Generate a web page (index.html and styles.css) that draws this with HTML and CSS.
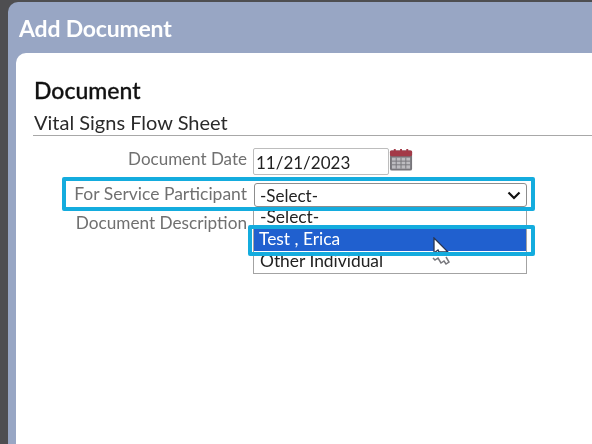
FILE: index.html
```html
<!DOCTYPE html>
<html lang="en">
<head>
<meta charset="utf-8">
<title>Add Document</title>
<link rel="stylesheet" href="styles.css">
</head>
<body>
<div class="dialog">
  <header class="titlebar">Add Document</header>
  <main class="panel">
    <h1 class="heading">Document</h1>
    <h2 class="subheading">Vital Signs Flow Sheet</h2>
    <form class="form">
      <div class="row row-date">
        <label class="label label-date">Document Date</label>
        <div class="date-input">11/21/2023</div>
        <svg class="calendar" width="25" height="24" viewBox="0 0 26 24" aria-hidden="true">
          <rect x="1" y="2" width="23" height="21" rx="2" fill="#77757a"/>
          <rect x="1" y="2" width="23" height="6" rx="1.500" fill="#a33a48"/>
          <rect x="3" y="9.500" width="19" height="11.500" fill="#bdbcc0"/>
          <path d="M3 13.200h19M3 17h19M7.500 9.500V21M12.500 9.500V21M17.500 9.500V21" stroke="#78777c" stroke-width="1"/>
          <path d="M6 0.500v3M12.500 0.500v3M19 0.500v3" stroke="#a33a48" stroke-width="2"/>
        </svg>
      </div>
      <div class="row row-select">
        <label class="label">For Service Participant</label>
        <div class="select">
          <span>-Select-</span>
          <svg class="chevron" width="14" height="9" viewBox="0 0 14 9" aria-hidden="true"><path d="M1.500 1.500L7 7l5.500-5.500" fill="none" stroke="#111" stroke-width="2.200"/></svg>
        </div>
      </div>
      <div class="row row-desc">
        <label class="label label-desc">Document Description</label>
      </div>
      <ul class="dropdown">
        <li class="option option-first">-Select-</li>
        <li class="option option-active">Test , Erica</li>
        <li class="option option-last">Other Individual</li>
      </ul>
      <svg class="cursor" width="20" height="32" viewBox="0 0 20 32" aria-hidden="true">
        <path d="M1 21l2 2 3-2 3 5 3-2 2 3 3-2-3-5" fill="#fff" stroke="#77777c" stroke-width="1.500"/>
        <path d="M2 1v15l4-3 1 2h9z" fill="#fff" stroke="#2a3550" stroke-width="1.300"/>
      </svg>
      <div class="frame frame-select"></div>
      <div class="frame frame-option"></div>
    </form>
  </main>
</div>
</body>
</html>
```
FILE: styles.css
```css
html, body {
  margin: 0;
  height: 444px;
  overflow: hidden;
}
body {
  background: #4e4e51;
  padding: 2px 0 0 8px;
  box-sizing: border-box;
  font-family: Lato, "Liberation Sans", sans-serif;
}
.dialog {
  height: 460px;
  background: #98a6c4;
  border-radius: 10px 0 0 0;
  display: flex;
  flex-direction: column;
  filter: blur(0.4px);
}
.titlebar {
  height: 51px;
  box-sizing: border-box;
  padding: 11px 0 0 11px;
  color: #fff;
  font-size: 23px;
  line-height: 30px;
  font-weight: 700;
  letter-spacing: -0.2px;
}
.panel {
  flex: 1;
  margin-left: 8px;
  background: #fff;
  border-radius: 10px 0 0 0;
  padding: 23px 0 0 17px;
}
.heading {
  margin: 0;
  padding-left: 1px;
  font-size: 23px;
  line-height: 28px;
  font-weight: 500;
  color: #111;
  -webkit-text-stroke: 0.3px #111;
}
.subheading {
  margin: 6px 0 0;
  padding: 0 0 0 1px;
  font-size: 20px;
  line-height: 25px;
  font-weight: 400;
  color: #2a2a2a;
  border-bottom: 1px solid #a8a8a8;
}
.form {
  position: relative;
  padding-top: 12px;
}
.row {
  display: flex;
  align-items: flex-start;
}
.label {
  width: 214px;
  flex: none;
  text-align: right;
  font-size: 17.500px;
  line-height: 22px;
  color: #707070;
}
.label-date {
  font-size: 17px;
}
.label-desc {
  font-size: 17.200px;
}
.row-date {
  height: 35px;
}
.date-input {
  width: 132px;
  height: 25px;
  margin-left: 6px;
  border: 1px solid #bdbdbd;
  border-radius: 2px;
  font-size: 17px;
  line-height: 27px;
  padding-left: 2px;
  color: #222;
}
.calendar {
  margin-left: 0;
}
.row-select {
  height: 29px;
}
.select {
  width: 273px;
  height: 24px;
  margin-left: 7px;
  box-sizing: border-box;
  border: 1px solid #8d8d8d;
  border-radius: 3px;
  padding: 0 5px 0 5px;
  display: flex;
  align-items: center;
  justify-content: space-between;
  font-size: 17px;
  color: #222;
}
.chevron {
  flex: none;
}
.dropdown {
  position: absolute;
  left: 220px;
  top: 71px;
  width: 274px;
  height: 67px;
  box-sizing: border-box;
  margin: 0;
  padding: 0;
  list-style: none;
  border: 1px solid #a3a3a3;
  border-top: 0;
  background: #fff;
  font-size: 17.400px;
  overflow: hidden;
}
.option {
  height: 22px;
  line-height: 22px;
  padding-left: 6px;
  color: #222;
}
.option-first {
  line-height: 20px;
}
.option-active {
  background: #2060cf;
  color: #fff;
  line-height: 20px;
  padding-left: 5px;
}
.option-last {
  line-height: 19px;
}
.frame {
  position: absolute;
  box-sizing: border-box;
  border: 4px solid #14acde;
  border-radius: 2px;
}
.frame-select {
  left: 29px;
  top: 41px;
  width: 473px;
  height: 34px;
}
.frame-option {
  left: 215px;
  top: 89px;
  width: 287px;
  height: 31px;
}
.cursor {
  position: absolute;
  left: 399px;
  top: 101px;
}
```
